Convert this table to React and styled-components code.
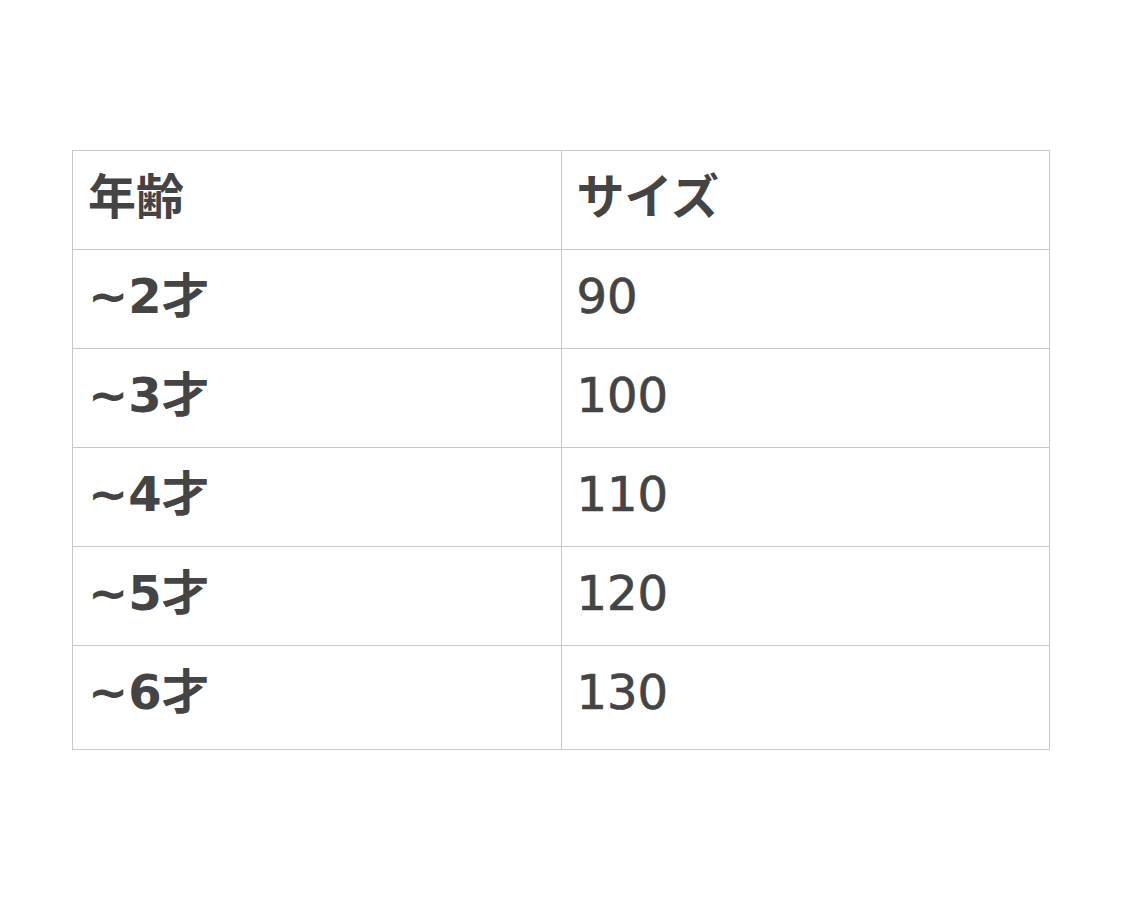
import React from "react";
import styled, { createGlobalStyle } from "styled-components";

const Global = createGlobalStyle`
  html, body { margin: 0; padding: 0; background: #fff; }
  body { font-family: "DejaVu Sans", "Noto Sans CJK JP", sans-serif; color: #444; }
`;

const Page = styled.div`
  width: 1125px;
  height: 900px;
  padding: 150px 0 0 72px;
  box-sizing: border-box;
`;

const Table = styled.table`
  width: 978px;
  border-collapse: collapse;
  table-layout: fixed;
`;

const Cell = styled.td`
  border: 1px solid #c8c8c8;
  height: ${(p) => (p.$last ? 104 : 99)}px;
  padding: ${(p) => (p.$last ? "0 15px 12px" : "0 15px 7px")};
  box-sizing: border-box;
  font-family: "DejaVu Sans", "Noto Sans CJK JP", sans-serif;
  font-size: 48px;
  font-weight: ${(p) => (p.$bold ? 700 : 400)};
  -webkit-text-stroke: ${(p) => (p.$bold ? "0" : "0.7px #444")};
  color: #444;
  vertical-align: middle;
  line-height: 1;
`;

const rows = [
  ["~2才", "90"],
  ["~3才", "100"],
  ["~4才", "110"],
  ["~5才", "120"],
  ["~6才", "130"],
];

export default function App() {
  return (
    <Page>
      <Global />
      <Table>
        <tbody>
          <tr>
            <Cell $bold>年齢</Cell>
            <Cell $bold>サイズ</Cell>
          </tr>
          {rows.map(([a, b], i) => (
            <tr key={a}>
              <Cell $bold $last={i === rows.length - 1}>{a}</Cell>
              <Cell $last={i === rows.length - 1}>{b}</Cell>
            </tr>
          ))}
        </tbody>
      </Table>
    </Page>
  );
}
